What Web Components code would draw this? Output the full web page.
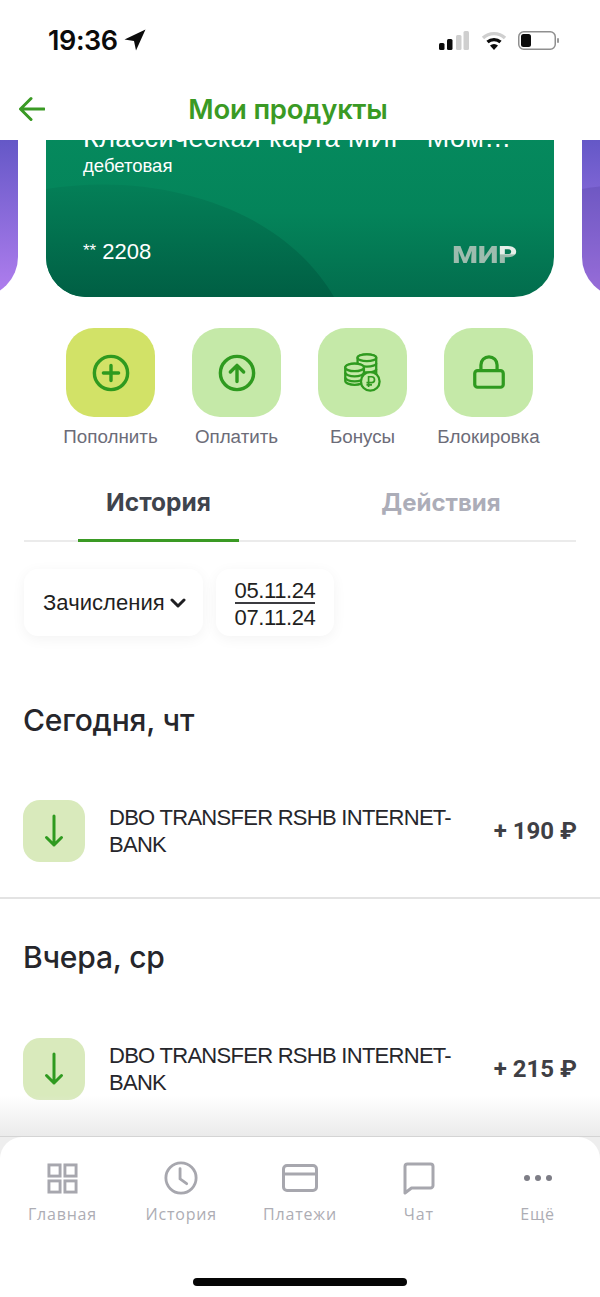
<!DOCTYPE html>
<html lang="ru">
<head>
<meta charset="utf-8">
<title>Мои продукты</title>
<style>
  html, body { margin: 0; padding: 0; background: #fff; }
  body { font-family: "Liberation Sans", Arial, sans-serif; }
</style>
</head>
<body>
<app-screen>
  <status-bar></status-bar>
  <nav-header>Мои продукты</nav-header>
  <card-carousel>
    <bank-card variant="purple"></bank-card>
    <bank-card>
      <span slot="title">Классическая карта МИР "Момент"</span>
      <span slot="type">дебетовая</span>
      <span slot="number">2208</span>
    </bank-card>
    <bank-card variant="purple"></bank-card>
  </card-carousel>
  <action-row>
    <action-tile label="Пополнить" accent>
      <svg viewBox="0 0 40 40" width="38" height="38" fill="none" stroke="#2f9a1f" stroke-width="3.600"><circle cx="20" cy="20" r="17.500"/><path d="M20 12v16M12 20h16" stroke-linecap="round"/></svg>
    </action-tile>
    <action-tile label="Оплатить">
      <svg viewBox="0 0 40 40" width="38" height="38" fill="none" stroke="#2f9a1f" stroke-width="3.600"><circle cx="20" cy="20" r="17.500"/><path d="M20 29V12.500M13 19l7-7 7 7" stroke-linecap="round" stroke-linejoin="round"/></svg>
    </action-tile>
    <action-tile label="Бонусы">
      <svg style="margin-left:2px" viewBox="0 0 46 46" width="39" height="39" fill="#c5e9a8" stroke="#2f9a1f" stroke-width="2.700"><path d="M16 5.500c0-2.200 5-4 11-4s11 1.800 11 4v25H16z"/><ellipse cx="27" cy="5.500" rx="11" ry="4"/><path d="M16 12c0 2.200 5 4 11 4s11-1.800 11-4M16 19c0 2.200 5 4 11 4s11-1.800 11-4" fill="none"/><path d="M1.500 17c0-2.500 5-4.500 11-4.500s11 2 11 4.500v16c0 2.500-5 4.500-11 4.500s-11-2-11-4.500z"/><ellipse cx="12.500" cy="17" rx="11" ry="4.500"/><path d="M1.500 23c0 2.500 5 4.500 11 4.500s11-2 11-4.500M1.500 29c0 2.500 5 4.500 11 4.500s11-2 11-4.500" fill="none"/><circle cx="31" cy="33.500" r="11"/><path d="M29 40v-12h3.500a3.400 3.400 0 0 1 0 7H26.500M26.500 37.500H33" fill="none" stroke-width="2"/></svg>
    </action-tile>
    <action-tile label="Блокировка">
      <svg viewBox="0 0 40 40" width="38" height="38" fill="none" stroke="#2f9a1f" stroke-width="3.400"><rect x="5" y="17.500" width="30" height="17.500" rx="3"/><path d="M11.500 17.500v-6a8.500 8.500 0 0 1 17 0v6"/></svg>
    </action-tile>
  </action-row>
  <tab-switch first="История" second="Действия"></tab-switch>
  <filter-row>
    <filter-chip>
      Зачисления
      <svg viewBox="0 0 16 10" width="16" height="10" fill="none" stroke="#1f1f22" stroke-width="3" stroke-linecap="round" stroke-linejoin="round"><path d="M2 2l6 6 6-6"/></svg>
    </filter-chip>
    <date-chip from="05.11.24" to="07.11.24"></date-chip>
  </filter-row>
  <day-section title="Сегодня, чт" divided>
    <op-row amount="+ 190 ₽">DBO TRANSFER RSHB INTERNET-BANK</op-row>
  </day-section>
  <day-section title="Вчера, ср">
    <op-row amount="+ 215 ₽">DBO TRANSFER RSHB INTERNET-BANK</op-row>
  </day-section>
  <tab-bar slot="bar">
    <tab-item label="Главная">
      <svg viewBox="0 0 32 32" width="31" height="31" fill="none" stroke="#a7a7ae" stroke-width="3"><rect x="2" y="2" width="11.500" height="11.500"/><rect x="18.500" y="2" width="11.500" height="11.500"/><rect x="2" y="18.500" width="11.500" height="11.500"/><rect x="18.500" y="18.500" width="11.500" height="11.500"/></svg>
    </tab-item>
    <tab-item label="История">
      <svg viewBox="0 0 36 36" width="34" height="34" fill="none" stroke="#a7a7ae" stroke-width="3"><circle cx="18" cy="18" r="16"/><path d="M17 8v11l7 5" stroke-linecap="round" stroke-linejoin="round"/></svg>
    </tab-item>
    <tab-item label="Платежи">
      <svg viewBox="0 0 36 28" width="36" height="28" fill="none" stroke="#a7a7ae" stroke-width="3"><rect x="1.500" y="1.500" width="33" height="25" rx="3.500"/><path d="M1.500 10h33"/></svg>
    </tab-item>
    <tab-item label="Чат">
      <svg viewBox="0 0 32 33" width="32" height="33" fill="none" stroke="#a7a7ae" stroke-width="3" stroke-linejoin="round"><path d="M2 4.500A2.500 2.500 0 0 1 4.500 2h23A2.500 2.500 0 0 1 30 4.500v19a2.500 2.500 0 0 1-2.500 2.500H8.500L2 31z"/></svg>
    </tab-item>
    <tab-item label="Ещё">
      <svg viewBox="0 0 30 8" width="30" height="8" fill="#7d7d86"><circle cx="4" cy="4" r="3"/><circle cx="15" cy="4" r="3"/><circle cx="26" cy="4" r="3"/></svg>
    </tab-item>
  </tab-bar>
</app-screen>

<script>
// small helper, every element gets its own open shadow root
function shadow(el, html) {
  el.attachShadow({mode: 'open'}).innerHTML = html;
}

class AppScreen extends HTMLElement {
  constructor() {
    super();
    shadow(this, `
      <style>
        :host { display: flex; flex-direction: column; width: 600px; height: 1297px; overflow: hidden; background: #eeeeee; position: relative; }
        .content { flex: 1; min-height: 0; overflow: hidden; position: relative; display: flex; flex-direction: column; background: #fff; }
        .content::after { content: ""; position: absolute; left: 0; right: 0; bottom: 0; height: 42px; background: linear-gradient(to bottom, rgba(238,238,238,0), #ebebeb calc(100% - 1px), #d4d4d4 calc(100% - 1px)); }
      </style>
      <div class="content"><slot></slot></div>
      <slot name="bar"></slot>
    `);
  }
}

class StatusBar extends HTMLElement {
  constructor() {
    super();
    shadow(this, `
      <style>
        :host { display: flex; align-items: center; justify-content: space-between; height: 80px; padding: 0 41px 0 48px; box-sizing: border-box; font-family: Inter, sans-serif; color: #0b0b0b; }
        .time { display: flex; align-items: center; gap: 6px; font-size: 27px; font-weight: 600; letter-spacing: -0.4px; }
        .right { display: flex; align-items: center; gap: 11px; }
        svg { display: block; }
        .bars { margin-right: 1px; }
      </style>
      <div class="time">19:36
        <svg viewBox="0 0 22 22" width="22" height="22" fill="#0b0b0b"><path d="M21.500.5L.5 10.500l9.500 1.500 2 9.500z"/></svg>
      </div>
      <div class="right">
        <svg class="bars" viewBox="0 0 30 19" width="30" height="19"><rect x="0" y="12" width="5.500" height="7" rx="1.500" fill="#0b0b0b"/><rect x="8" y="8" width="5.500" height="11" rx="1.500" fill="#0b0b0b"/><rect x="17" y="4" width="5.500" height="15" rx="1.500" fill="#cfcfcf"/><rect x="24.500" y="0" width="5.500" height="19" rx="1.500" fill="#cfcfcf"/></svg>
        <svg viewBox="0 0 26 19" width="26" height="19" fill="none" stroke-width="3.400"><path d="M2 7a16 16 0 0 1 22 0" stroke="#cfcfcf"/><path d="M6.500 11a10 10 0 0 1 13 0" stroke="#0b0b0b"/><path d="M13 19l-4-4.500a6 6 0 0 1 8 0z" fill="#0b0b0b"/></svg>
        <svg viewBox="0 0 41 19" width="41" height="19"><rect x=".75" y=".75" width="36.500" height="17.500" rx="5" fill="#fff" stroke="#8f8f8f" stroke-width="1.500"/><rect x="3" y="3" width="10" height="13" rx="2.500" fill="#0b0b0b"/><rect x="39" y="7" width="2" height="5" rx="1" fill="#9a9a9a"/></svg>
      </div>
    `);
  }
}

class NavHeader extends HTMLElement {
  constructor() {
    super();
    shadow(this, `
      <style>
        :host { display: grid; grid-template-columns: 1fr auto 1fr; align-items: center; height: 60px; padding: 0 43px 3px 19px; box-sizing: border-box; color: #3a9a24; font-family: Inter, sans-serif; font-size: 27.500px; font-weight: 600; background: #fff; }
        .title { letter-spacing: -0.2px; }
        svg { display: block; }
      </style>
      <svg viewBox="0 0 26 26" width="26" height="26" fill="none" stroke="#3a9a24" stroke-width="3" stroke-linecap="round" stroke-linejoin="round"><path d="M25 13H2.500M12 2.500L1.500 13 12 23.500"/></svg>
      <div class="title"><slot></slot></div>
      <div></div>
    `);
  }
}

class CardCarousel extends HTMLElement {
  constructor() {
    super();
    shadow(this, `
      <style>
        :host { display: flex; justify-content: center; align-items: flex-end; gap: 28px; height: 157px; overflow: hidden; }
      </style>
      <slot></slot>
    `);
  }
}

class BankCard extends HTMLElement {
  constructor() {
    super();
    shadow(this, `
      <style>
        :host { display: block; flex: none; width: 508px; height: 210px; border-radius: 40px; overflow: hidden; position: relative; color: #fff; background: linear-gradient(to bottom, #068d5f, #04845a 60%, #026d4d); }
        :host([variant="purple"]) { background: linear-gradient(to bottom, #5f55c4 20%, #ac7cec 95%); }
        .arc { position: absolute; left: 0; bottom: 0; display: block; }
        .arc path { fill: url(#arcfill); }
        :host([variant="purple"]) .arc path { fill: rgba(70,50,140,0.22); }
        .inner { position: relative; display: flex; flex-direction: column; height: 100%; box-sizing: border-box; padding: 36px 42px 32px 37px; }
        .title { font-size: 27px; line-height: 30px; letter-spacing: 0.4px; white-space: nowrap; overflow: hidden; text-overflow: ellipsis; }
        .type { font-size: 18.500px; line-height: 22px; margin-top: 2px; }
        .foot { margin-top: auto; display: flex; justify-content: space-between; align-items: flex-end; }
        .num { font-size: 22px; line-height: 26px; }
        .stars { font-size: 17px; vertical-align: 3px; }
        .mir { font-family: Roboto, sans-serif; font-weight: 900; font-size: 24px; line-height: 20px; color: #9dbcae; transform: scaleX(1.220); transform-origin: right; margin-right: -5px; }
        .mir b { font-weight: 900; background: linear-gradient(to bottom, #e6efe9 45%, #9dbcae 50%); -webkit-background-clip: text; background-clip: text; color: transparent; }
        :host([variant="purple"]) .inner { display: none; }
      </style>
      <svg class="arc" viewBox="0 0 288 116" width="288" height="116">
        <defs><linearGradient id="arcfill" x1="0" y1="0" x2="0" y2="1"><stop offset="0" stop-color="#047f57"/><stop offset="1" stop-color="#005f44"/></linearGradient></defs>
        <path d="M0 8C110-10 235 25 288 116H0z"/>
      </svg>
      <div class="inner">
        <div class="title"><slot name="title"></slot></div>
        <div class="type"><slot name="type"></slot></div>
        <div class="foot">
          <div class="num"><span class="stars">**</span> <slot name="number"></slot></div>
          <div class="mir">МИ<b>Р</b></div>
        </div>
      </div>
    `);
  }
}

class ActionRow extends HTMLElement {
  constructor() {
    super();
    shadow(this, `
      <style>
        :host { display: flex; justify-content: center; margin: 31px 1px 0 0; }
      </style>
      <slot></slot>
    `);
  }
}

class ActionTile extends HTMLElement {
  constructor() {
    super();
    shadow(this, `
      <style>
        :host { display: flex; flex-direction: column; align-items: center; width: 126px; }
        .tile { width: 89px; height: 89px; border-radius: 28px; background: #c5e9a8; display: flex; align-items: center; justify-content: center; }
        :host([accent]) .tile { background: #d2e267; }
        .label { margin-top: 9px; font-size: 18.800px; line-height: 22px; color: #6c6c78; white-space: nowrap; }
      </style>
      <div class="tile"><slot></slot></div>
      <div class="label">${this.getAttribute('label')}</div>
    `);
  }
}

class TabSwitch extends HTMLElement {
  constructor() {
    super();
    shadow(this, `
      <style>
        :host { display: flex; height: 74px; margin: 20px 24px 0; border-bottom: 2px solid #ebebeb; box-sizing: border-box; font-family: Inter, sans-serif; font-size: 24px; font-weight: 700; }
        .tab { flex: 1; display: flex; align-items: center; justify-content: center; padding-bottom: 4px; position: relative; }
        .first { color: #3f444d; flex: none; width: 269px; font-size: 24.500px; }
        .first::after { content: ""; position: absolute; left: 54px; width: 161px; bottom: -2px; height: 3px; background: #3a9a24; }
        .second { color: #acadb8; padding-left: 13px; }
      </style>
      <div class="tab first">${this.getAttribute('first')}</div>
      <div class="tab second">${this.getAttribute('second')}</div>
    `);
  }
}

class FilterRow extends HTMLElement {
  constructor() {
    super();
    shadow(this, `
      <style>
        :host { display: flex; gap: 13px; margin: 27px 24px 0; }
      </style>
      <slot></slot>
    `);
  }
}

class FilterChip extends HTMLElement {
  constructor() {
    super();
    shadow(this, `
      <style>
        :host { display: flex; align-items: center; gap: 5px; width: 179px; height: 67px; box-sizing: border-box; padding-left: 19px; border-radius: 14px; background: #fff; box-shadow: 0 3px 14px rgba(0,0,0,0.05); font-size: 22px; color: #1f1f22; letter-spacing: 0.05px; }
      </style>
      <slot></slot>
    `);
  }
}

class DateChip extends HTMLElement {
  constructor() {
    super();
    shadow(this, `
      <style>
        :host { display: flex; flex-direction: column; align-items: center; justify-content: center; width: 118px; height: 67px; box-sizing: border-box; padding-top: 5px; border-radius: 14px; background: #fff; box-shadow: 0 3px 14px rgba(0,0,0,0.05); font-size: 22px; line-height: 27px; color: #1f1f22; letter-spacing: -0.4px; }
        .from { line-height: 22px; border-bottom: 2px solid #3b3b40; }
      </style>
      <div class="from">${this.getAttribute('from')}</div>
      <div>${this.getAttribute('to')}</div>
    `);
  }
}

class DaySection extends HTMLElement {
  constructor() {
    super();
    shadow(this, `
      <style>
        :host { display: block; }
        :host([divided]) { border-bottom: 2px solid #e3e3e3; margin-top: 67px; padding-bottom: 35px; }
        .title { margin: 0 0 63px 23px; font-family: Inter, sans-serif; font-size: 30px; line-height: 34px; font-weight: 500; color: #26262b; letter-spacing: -0.2px; }
        :host(:not([divided])) .title { margin: 41px 0 64px 23px; }
      </style>
      <div class="title">${this.getAttribute('title')}</div>
      <slot></slot>
    `);
  }
}

class OpRow extends HTMLElement {
  constructor() {
    super();
    shadow(this, `
      <style>
        :host { display: flex; align-items: center; padding: 0 23px; }
        .icon { flex: none; width: 62px; height: 62px; border-radius: 17px; background: #d9eabc; display: flex; align-items: center; justify-content: center; }
        .text { width: 360px; margin-left: 24px; font-size: 22px; line-height: 27px; color: #26262b; letter-spacing: -0.72px; }
        .amount { margin-left: auto; font-family: Roboto, sans-serif; font-size: 24px; font-weight: 700; color: #3f3f45; white-space: nowrap; }
      </style>
      <div class="icon">
        <svg viewBox="0 0 24 34" width="24" height="34" fill="none" stroke="#2f9a1f" stroke-width="3" stroke-linecap="round" stroke-linejoin="round"><path d="M12 2v29M4.500 23.500L12 31l7.500-7.500"/></svg>
      </div>
      <div class="text"><slot></slot></div>
      <div class="amount">${this.getAttribute('amount')}</div>
    `);
  }
}

class TabBar extends HTMLElement {
  constructor() {
    super();
    shadow(this, `
      <style>
        :host { display: block; height: 160px; box-sizing: border-box; padding: 23px 3px 0; background: #fff; border-radius: 22px 22px 0 0; position: relative; }
        .items { display: grid; grid-template-columns: repeat(5, 1fr); }
        .home { position: absolute; left: 193px; bottom: 11px; width: 214px; height: 8px; border-radius: 4px; background: #050505; }
      </style>
      <div class="items"><slot></slot></div>
      <div class="home"></div>
    `);
  }
}

class TabItem extends HTMLElement {
  constructor() {
    super();
    shadow(this, `
      <style>
        :host { display: flex; flex-direction: column; align-items: center; }
        .icon { height: 36px; display: flex; align-items: center; justify-content: center; }
        .label { margin-top: 7px; font-family: "Open Sans", sans-serif; font-size: 16px; line-height: 22px; color: #adadb4; letter-spacing: 0.8px; }
        ::slotted(svg) { display: block; }
      </style>
      <div class="icon"><slot></slot></div>
      <div class="label">${this.getAttribute('label')}</div>
    `);
  }
}

customElements.define('app-screen', AppScreen);
customElements.define('status-bar', StatusBar);
customElements.define('nav-header', NavHeader);
customElements.define('card-carousel', CardCarousel);
customElements.define('bank-card', BankCard);
customElements.define('action-row', ActionRow);
customElements.define('action-tile', ActionTile);
customElements.define('tab-switch', TabSwitch);
customElements.define('filter-row', FilterRow);
customElements.define('filter-chip', FilterChip);
customElements.define('date-chip', DateChip);
customElements.define('day-section', DaySection);
customElements.define('op-row', OpRow);
customElements.define('tab-bar', TabBar);
customElements.define('tab-item', TabItem);
</script>
</body>
</html>
